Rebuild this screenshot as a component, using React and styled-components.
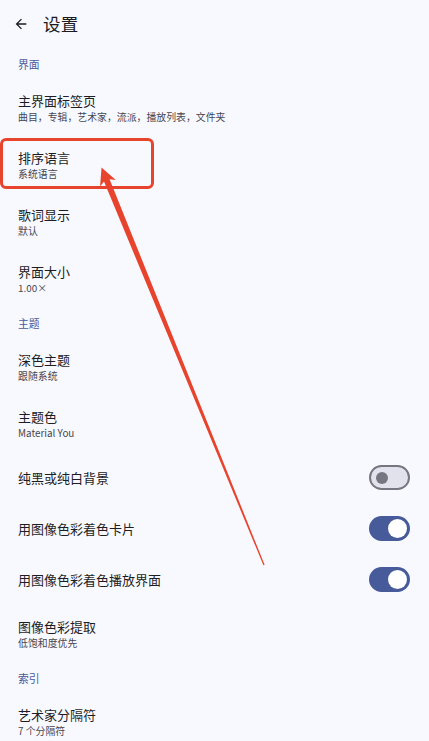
import React from "react";
import styled, { createGlobalStyle } from "styled-components";

const Global = createGlobalStyle`
  html, body { margin: 0; padding: 0; background: #f8f9ff; }
  body { font-family: "Noto Sans CJK SC", "Noto Sans", Roboto, sans-serif; -webkit-font-smoothing: antialiased; }
`;

const Page = styled.div`
  position: relative;
  width: 429px;
  height: 741px;
  overflow: hidden;
  background: #f8f9ff;
  color: #1b1b21;
`;

const TopBar = styled.div`
  height: 48px;
  display: flex;
  align-items: center;
  padding-left: 12px;
  gap: 14px;
`;

const BackBtn = styled.div`
  width: 17px;
  height: 17px;
  display: flex;
  align-items: center;
  justify-content: center;
  color: #1b1b21;
`;

const Title = styled.div`
  font-size: 17.5px;
  line-height: 24px;
  color: #1b1b21;
  letter-spacing: 0.3px;
`;

const Section = styled.div`
  padding: 8px 18px 7px;
  font-size: 10.8px;
  line-height: 16px;
  color: #4a5a9a;
`;

const Row = styled.div`
  height: ${(p) => (p.$compact ? 51 : 57)}px;
  box-sizing: border-box;
  display: flex;
  align-items: center;
  justify-content: space-between;
  padding: 0 19px 0 18px;
`;

const Texts = styled.div`
  display: flex;
  flex-direction: column;
`;

const ItemTitle = styled.div`
  font-size: 13px;
  line-height: 18px;
  color: #1d1d23;
`;

const ItemSub = styled.div`
  font-size: 9.9px;
  line-height: 13px;
  color: #46464f;
  margin-top: 1px;
`;

const Track = styled.div`
  width: 41px;
  height: 25px;
  box-sizing: border-box;
  border-radius: 13px;
  display: flex;
  align-items: center;
  background: ${(p) => (p.$on ? "#475a99" : "#e1e2ec")};
  border: 2px solid ${(p) => (p.$on ? "#475a99" : "#757680")};
  justify-content: ${(p) => (p.$on ? "flex-end" : "flex-start")};
  padding: 0 ${(p) => (p.$on ? 1 : 5)}px;
`;

const Thumb = styled.div`
  width: ${(p) => (p.$on ? 19 : 12)}px;
  height: ${(p) => (p.$on ? 19 : 12)}px;
  border-radius: 50%;
  background: ${(p) => (p.$on ? "#ffffff" : "#757680")};
`;

const Highlight = styled.div`
  position: absolute;
  left: 0;
  top: 138px;
  width: 154px;
  height: 51px;
  box-sizing: border-box;
  border: 3px solid #e8442d;
  border-radius: 6px;
  pointer-events: none;
`;

const Overlay = styled.svg`
  position: absolute;
  left: 0;
  top: 0;
  pointer-events: none;
`;

function Switch({ on }) {
  return (
    <Track $on={on}>
      <Thumb $on={on} />
    </Track>
  );
}

function Item({ title, sub, toggle }) {
  const compact = toggle !== undefined;
  return (
    <Row $compact={compact}>
      <Texts>
        <ItemTitle>{title}</ItemTitle>
        {sub && <ItemSub>{sub}</ItemSub>}
      </Texts>
      {compact && <Switch on={toggle} />}
    </Row>
  );
}

function arrowPoints() {
  const tip = [101.5, 167.5];
  const tail = [264, 565];
  const dx = tail[0] - tip[0];
  const dy = tail[1] - tip[1];
  const len = Math.hypot(dx, dy);
  const u = [dx / len, dy / len];
  const n = [-u[1], u[0]];
  const headLen = 17;
  const headHalf = 8.5;
  const b = [tip[0] + u[0] * headLen, tip[1] + u[1] * headLen];
  const notch = [tip[0] + u[0] * (headLen - 3), tip[1] + u[1] * (headLen - 3)];
  const sw0 = 3;
  const sw1 = 0.6;
  const p = (c, k, w) => [c[0] + n[0] * w * k, c[1] + n[1] * w * k];
  const pts = [
    tip,
    p(b, 1, headHalf),
    p(notch, 1, sw0),
    p(tail, 1, sw1),
    p(tail, -1, sw1),
    p(notch, -1, sw0),
    p(b, -1, headHalf),
  ];
  return pts.map((q) => q[0].toFixed(1) + "," + q[1].toFixed(1)).join(" ");
}

export default function App() {
  return (
    <>
      <Global />
      <Page>
        <TopBar>
          <BackBtn>
            <svg width="16" height="16" viewBox="0 0 24 24">
              <path d="M20 11H7.83l5.59-5.59L12 4l-8 8 8 8 1.41-1.41L7.83 13H20v-2z" fill="#1b1b21" />
            </svg>
          </BackBtn>
          <Title>设置</Title>
        </TopBar>
        <Section>界面</Section>
        <Item title="主界面标签页" sub="曲目，专辑，艺术家，流派，播放列表，文件夹" />
        <Item title="排序语言" sub="系统语言" />
        <Item title="歌词显示" sub="默认" />
        <Item title="界面大小" sub="1.00×" />
        <Section>主题</Section>
        <Item title="深色主题" sub="跟随系统" />
        <Item title="主题色" sub="Material You" />
        <Item title="纯黑或纯白背景" toggle={false} />
        <Item title="用图像色彩着色卡片" toggle={true} />
        <Item title="用图像色彩着色播放界面" toggle={true} />
        <Item title="图像色彩提取" sub="低饱和度优先" />
        <Section>索引</Section>
        <Item title="艺术家分隔符" sub="7 个分隔符" />
        <Highlight />
        <Overlay width="429" height="741" viewBox="0 0 429 741">
          <polygon points={arrowPoints()} fill="#e8442d" />
        </Overlay>
      </Page>
    </>
  );
}
